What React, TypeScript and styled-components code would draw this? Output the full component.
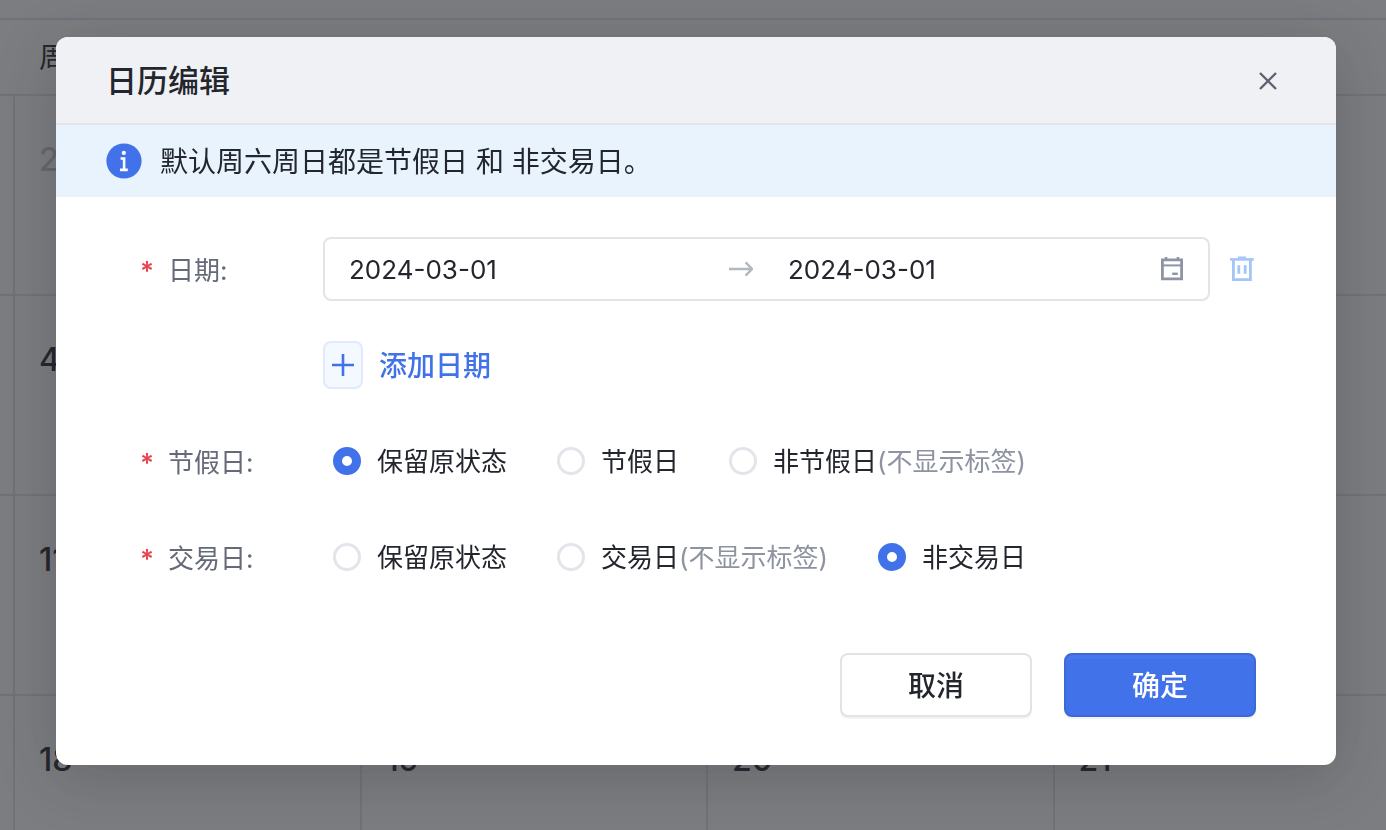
import React, { useState } from 'react';
import styled, { createGlobalStyle } from 'styled-components';

const GlobalStyle = createGlobalStyle`
  * { box-sizing: border-box; }
  body {
    margin: 0;
    background: #fff;
    color: #23262d;
    font-family: Inter, "Noto Sans CJK SC", sans-serif;
  }
  button, input { font: inherit; color: inherit; }
`;

const Page = styled.main`
  height: 100vh;
  overflow: hidden;
  padding-top: 18px;
`;

const Calendar = styled.table`
  width: 100%;
  table-layout: fixed;
  border-spacing: 0;
  border-top: 2px solid #e4e4ee;
`;

const GutterCol = styled.col`
  width: 13px;
`;

const DayCol = styled.col`
  width: 25%;
`;

const HeadCell = styled.th`
  height: 76px;
  padding: 2px 26px 0;
  border-bottom: 2px solid #e4e4ee;
  font-size: 28px;
  font-weight: 400;
  line-height: 40px;
  text-align: left;
`;

const DayCell = styled.td<{ $muted?: boolean }>`
  height: 200px;
  padding: 44px 24px;
  border-left: 2px solid #e4e4ee;
  border-bottom: 2px solid #e4e4ee;
  color: ${(p) => (p.$muted ? '#c9cad0' : '#23262d')};
  font-size: 32px;
  font-weight: 500;
  line-height: 40px;
  vertical-align: top;
`;

const GutterCell = styled.td`
  padding: 0;
  border-bottom: 2px solid #e4e4ee;
`;

const Overlay = styled.div`
  position: fixed;
  inset: 0;
  display: flex;
  align-items: flex-start;
  padding: 37px 50px 37px 56px;
  background: rgba(36, 38, 43, 0.6);
`;

const Dialog = styled.section`
  flex: 1;
  min-width: 0;
  border-radius: 12px;
  overflow: hidden;
  background: #fff;
  box-shadow: 0 12px 60px rgba(31, 35, 41, 0.24);
`;

const DialogHeader = styled.header`
  display: flex;
  align-items: center;
  justify-content: space-between;
  height: 88px;
  padding: 2px 56px 0 50px;
  border-bottom: 2px solid #e4e5ea;
  background: #f0f1f5;
`;

const Title = styled.h2`
  margin: 0;
  font-size: 31px;
  font-weight: 500;
  line-height: 48px;
`;

const IconButton = styled.button<{ $color: string }>`
  display: flex;
  padding: 0;
  border: 0;
  background: none;
  color: ${(p) => p.$color};
  cursor: pointer;
`;

const Banner = styled.div`
  display: flex;
  align-items: center;
  gap: 18px;
  height: 72px;
  padding: 0 50px;
  background: #e8f3fe;
  font-size: 28px;
  line-height: 40px;
`;

/* The CJK glyphs sit high in their line box, so captions get a little room above. */
const Caption = styled.span`
  padding-top: 2px;
`;

const Form = styled.form`
  padding: 40px 80px 48px;
`;

const Row = styled.div`
  display: flex;
  align-items: center;
  height: 64px;
  margin-bottom: 32px;
`;

const Label = styled.div`
  display: flex;
  flex-shrink: 0;
  gap: 14px;
  width: 187px;
  padding: 2px 0 0 4px;
  color: #646a78;
  font-size: 26px;
  line-height: 40px;
`;

const Star = styled(Caption)`
  color: #e5484d;
  font-weight: 600;
`;

const DateField = styled.div`
  display: flex;
  flex: 1;
  min-width: 0;
  align-items: center;
  height: 64px;
  padding: 0 24px;
  border: 2px solid #e3e4ea;
  border-radius: 8px;
  color: #8d94a3;
`;

const DateInput = styled.input`
  flex: 1;
  width: 0;
  min-width: 0;
  height: 40px;
  padding: 1px 0 0;
  border: 0;
  outline: 0;
  background: none;
  color: #23262d;
  font-size: 26px;
`;

const Separator = styled.span`
  display: flex;
  padding: 0 35px 0 8px;
  color: #b3b7c0;
`;

const DeleteSlot = styled.div`
  display: flex;
  flex-shrink: 0;
  justify-content: flex-end;
  width: 46px;
  padding-right: 2px;
`;

const AddRow = styled.div`
  display: flex;
  padding: 8px 0 0 187px;
  margin-bottom: 40px;
`;

const AddButton = styled.button`
  display: flex;
  align-items: center;
  gap: 16px;
  padding: 0;
  border: 0;
  background: none;
  color: #4172ea;
  font-size: 28px;
  font-weight: 500;
  line-height: 40px;
  cursor: pointer;
`;

const PlusBox = styled.span`
  display: flex;
  align-items: center;
  justify-content: center;
  width: 40px;
  height: 48px;
  border: 2px solid #e1eafc;
  border-radius: 8px;
  background: #f4f8ff;
`;

const Options = styled.div`
  display: flex;
  gap: 50px;
  padding-left: 10px;
`;

const Option = styled.label`
  display: flex;
  align-items: center;
  gap: 16px;
  font-size: 26px;
  line-height: 40px;
  white-space: nowrap;
`;

const Radio = styled.input`
  appearance: none;
  width: 28px;
  height: 28px;
  margin: 0;
  border: 3px solid #e4e5ea;
  border-radius: 50%;
  background: #fff;

  &:checked {
    border: 9px solid #4172ea;
  }
`;

const Hint = styled.span`
  color: #8d93a1;
`;

const Footer = styled.footer`
  display: flex;
  justify-content: flex-end;
  gap: 32px;
  padding-top: 32px;
`;

const FormButton = styled.button<{ $primary?: boolean }>`
  width: 192px;
  height: 64px;
  padding: 2px 0 0;
  border: 2px solid ${(p) => (p.$primary ? '#3d69d6' : '#e3e3e4')};
  border-radius: 8px;
  background: ${(p) => (p.$primary ? '#4172ea' : '#fff')};
  box-shadow: 0 2px 0 rgba(31, 35, 41, 0.06)${(p) => (p.$primary ? ', inset 0 4px 0 #4677ec' : '')};
  color: ${(p) => (p.$primary ? '#fff' : '#23262d')};
  font-size: 28px;
  font-weight: 500;
  line-height: 40px;
  cursor: pointer;
`;

const CloseIcon = () => (
  <svg width="24" height="24" viewBox="0 0 24 24" fill="none" stroke="currentColor" strokeWidth="2.4">
    <path d="M4 4L20 20M20 4L4 20" />
  </svg>
);

const InfoIcon = () => (
  <svg width="36" height="36" viewBox="0 0 36 36">
    <circle cx="18" cy="18" r="17.6" fill="#4172ea" />
    <circle cx="17.8" cy="9.9" r="2.1" fill="#fff" />
    <path d="M14.6 14.2h4.8v11.4h2.4v2.6h-7.8v-2.6h2.8v-8.8h-2.2z" fill="#fff" />
  </svg>
);

const ArrowIcon = () => (
  <svg width="24" height="24" viewBox="0 0 24 24" fill="none" stroke="currentColor" strokeWidth="2.4">
    <path d="M0 12H23M16.6 5.4L23 12L16.6 18.6" />
  </svg>
);

const CalendarIcon = () => (
  <svg width="24" height="24" viewBox="0 0 24 24" fill="none" stroke="currentColor">
    <path d="M2.4 2.8H21.6V21.8H2.4Z" strokeWidth="2.8" />
    <path d="M2 8.4H22" strokeWidth="2" />
    <path d="M6 0V3M18 0V3" strokeWidth="2.6" />
    <path d="M12.2 16.8H17.8" strokeWidth="2.4" />
  </svg>
);

const TrashIcon = () => (
  <svg width="24" height="26" viewBox="0 0 24 26" fill="none" stroke="currentColor">
    <path d="M0 3.4H23.8" strokeWidth="2.6" />
    <path d="M7.8 1.4H16.2" strokeWidth="1.8" />
    <path d="M3.4 3V23.7H20.4V3" strokeWidth="2.8" />
    <path d="M8.8 9.2V17.8M15.2 9.2V17.8" strokeWidth="2.8" />
  </svg>
);

const PlusIcon = () => (
  <svg width="24" height="24" viewBox="0 0 24 24" fill="none" stroke="currentColor" strokeWidth="2.6">
    <path d="M1 12H23M12 1V23" />
  </svg>
);

type Choice = { value: string; text: string; hint?: string };

const holidayChoices: Choice[] = [
  { value: 'keep', text: '保留原状态' },
  { value: 'yes', text: '节假日' },
  { value: 'no', text: '非节假日', hint: '(不显示标签)' },
];

const tradingChoices: Choice[] = [
  { value: 'keep', text: '保留原状态' },
  { value: 'yes', text: '交易日', hint: '(不显示标签)' },
  { value: 'no', text: '非交易日' },
];

const weeks = [
  [26, 27, 28, 29],
  [4, 5, 6, 7],
  [11, 12, 13, 14],
  [18, 19, 20, 21],
];

function RadioRow({ name, label, choices, initial }: { name: string; label: string; choices: Choice[]; initial: string }) {
  const [value, setValue] = useState(initial);
  return (
    <Row role="radiogroup" aria-labelledby={`${name}-label`}>
      <Label id={`${name}-label`}>
        <Star>*</Star>
        <Caption>{label}:</Caption>
      </Label>
      <Options>
        {choices.map((c) => (
          <Option key={c.value}>
            <Radio type="radio" name={name} checked={value === c.value} onChange={() => setValue(c.value)} />
            <Caption>
              {c.text}
              {c.hint && <Hint>{c.hint}</Hint>}
            </Caption>
          </Option>
        ))}
      </Options>
    </Row>
  );
}

export default function App() {
  const [start, setStart] = useState('2024-03-01');
  const [end, setEnd] = useState('2024-03-01');

  return (
    <>
      <GlobalStyle />
      <Page>
        <Calendar>
          <colgroup>
            <GutterCol />
            <DayCol />
            <DayCol />
            <DayCol />
            <col />
          </colgroup>
          <thead>
            <tr>
              <HeadCell as="td" />
              {['周一', '周二', '周三', '周四'].map((d) => (
                <HeadCell key={d}>{d}</HeadCell>
              ))}
            </tr>
          </thead>
          <tbody>
            {weeks.map((week, i) => (
              <tr key={week[0]}>
                <GutterCell />
                {week.map((day) => (
                  <DayCell key={day} $muted={i === 0}>{day}</DayCell>
                ))}
              </tr>
            ))}
          </tbody>
        </Calendar>
      </Page>
      <Overlay>
        <Dialog role="dialog" aria-modal="true" aria-labelledby="dialog-title">
          <DialogHeader>
            <Title id="dialog-title">日历编辑</Title>
            <IconButton type="button" aria-label="关闭" $color="#5c6270">
              <CloseIcon />
            </IconButton>
          </DialogHeader>
          <Banner>
            <InfoIcon />
            <Caption>默认周六周日都是节假日 和 非交易日。</Caption>
          </Banner>
          <Form onSubmit={(e) => e.preventDefault()}>
            <Row>
              <Label as="label" htmlFor="start-date">
                <Star>*</Star>
                <Caption>日期:</Caption>
              </Label>
              <DateField>
                <DateInput id="start-date" value={start} onChange={(e) => setStart(e.target.value)} />
                <Separator>
                  <ArrowIcon />
                </Separator>
                <DateInput aria-label="结束日期" value={end} onChange={(e) => setEnd(e.target.value)} />
                <CalendarIcon />
              </DateField>
              <DeleteSlot>
                <IconButton type="button" aria-label="删除" $color="#a5c5f8">
                  <TrashIcon />
                </IconButton>
              </DeleteSlot>
            </Row>
            <AddRow>
              <AddButton type="button">
                <PlusBox>
                  <PlusIcon />
                </PlusBox>
                <Caption>添加日期</Caption>
              </AddButton>
            </AddRow>
            <RadioRow name="holiday" label="节假日" choices={holidayChoices} initial="keep" />
            <RadioRow name="trading" label="交易日" choices={tradingChoices} initial="no" />
            <Footer>
              <FormButton type="button">取消</FormButton>
              <FormButton type="submit" $primary>确定</FormButton>
            </Footer>
          </Form>
        </Dialog>
      </Overlay>
    </>
  );
}
